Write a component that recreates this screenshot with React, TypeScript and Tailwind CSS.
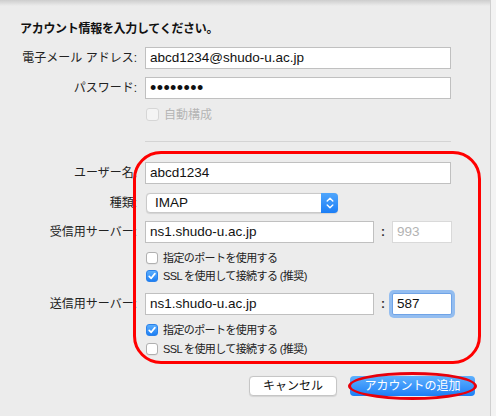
import React from "react";

function Check({ checked = false, disabled = false, big = false }: { checked?: boolean; disabled?: boolean; big?: boolean }) {
  const size = big ? "h-[13px] w-[13px]" : "h-[12px] w-[12px]";
  if (checked) {
    return (
      <div className={`${size} flex shrink-0 items-center justify-center rounded-[3px] border border-[#2c82ea] bg-gradient-to-b from-[#5aaefd] to-[#1c7ff4]`}>
        <svg width="10" height="10" viewBox="0 0 10 10">
          <path d="M2.2 5.3 L4.2 7.3 L7.9 2.6" fill="none" stroke="#ffffff" strokeWidth="1.7" strokeLinecap="round" strokeLinejoin="round" />
        </svg>
      </div>
    );
  }
  if (disabled) {
    return <div className={`${size} shrink-0 rounded-[3px] border border-[#d6d6d6] bg-[#f4f4f4]`} />;
  }
  return <div className={`${size} shrink-0 rounded-[3px] border border-[#b0b0b0] bg-white shadow-[0_0.5px_0.5px_rgba(0,0,0,0.08)]`} />;
}

function Row({ label, children, h = "h-[22px]", mt }: { label?: string; children: React.ReactNode; h?: string; mt: string }) {
  return (
    <div className={`flex items-center ${h} ${mt}`}>
      <div className="w-[137px] shrink-0 text-right text-[12px] leading-none text-[#222222]">{label}</div>
      <div className="ml-[8px] flex items-center">{children}</div>
    </div>
  );
}

function Box({ w, children, muted = false, focus = false }: { w: string; children?: React.ReactNode; muted?: boolean; focus?: boolean }) {
  const border = muted
    ? "border-[#d9d9d9] text-[#b3b3b3]"
    : focus
    ? "border-[#6fa3e6] text-[#111111] shadow-[0_0_0_3px_#93bdf0] rounded-[2px]"
    : "border-[#c0c0c0] text-[#111111]";
  return (
    <div className={`flex h-[22px] ${w} items-center border bg-white pl-[4px] text-[13.5px] leading-none ${border}`}>
      {children}
    </div>
  );
}

function CheckRow({ label, checked, mt }: { label: string; checked?: boolean; mt: string }) {
  return (
    <div className={`flex h-[12px] items-center pl-[146px] ${mt}`}>
      <Check checked={checked} />
      <span className="ml-[5px] whitespace-nowrap text-[11px] leading-none tracking-[-0.6px] text-[#222222]">{label}</span>
    </div>
  );
}

function Colon() {
  return <div className="w-[18px] text-center text-[12px] font-bold leading-none text-[#333333]">:</div>;
}

export default function App() {
  return (
    <div className="relative flex h-[416px] w-[496px] overflow-hidden bg-[#ececec] font-['Liberation_Sans','Noto_Sans_CJK_JP',sans-serif] text-[#1e1e1e]">
      <div className="relative w-[490px] shrink-0">
        <div className="pointer-events-none absolute inset-x-0 top-0 h-[6px] bg-gradient-to-b from-[#cdcdcd] to-[#ececec00]" />

        <div className="pl-[20px] pt-[21px] text-[12px] font-bold leading-[16px] tracking-[-0.3px] text-[#111111]">
          アカウント情報を入力してください。
        </div>

        <Row label="電子メール アドレス:" mt="mt-[10px]">
          <Box w="w-[306px]">abcd1234@shudo-u.ac.jp</Box>
        </Row>
        <Row label="パスワード:" mt="mt-[8px]">
          <Box w="w-[306px]">
            <span className="text-[18px] leading-none tracking-[0.4px] text-[#111111]">••••••••</span>
          </Box>
        </Row>
        <div className="mt-[9px] flex h-[13px] items-center pl-[146px]">
          <Check disabled big />
          <span className="ml-[5px] text-[12px] leading-none text-[#b5b5b5]">自動構成</span>
        </div>

        <div className="ml-[145px] mt-[20px] h-px w-[306px] bg-[#d4d4d4]" />

        <Row label="ユーザー名:" mt="mt-[20px]">
          <Box w="w-[306px]">abcd1234</Box>
        </Row>
        <Row label="種類:" mt="mt-[9px]" h="h-[20px]">
          <div className="ml-[1px] flex h-[20px] w-[192px] items-center rounded-[4px] border border-[#c9c9c9] bg-white shadow-[0_0.5px_1px_rgba(0,0,0,0.1)]">
            <span className="flex-1 pl-[8px] text-[13.5px] leading-none text-[#111111]">IMAP</span>
            <div className="-mr-px -my-px flex h-[20px] w-[17px] items-center justify-center rounded-r-[4px] bg-gradient-to-b from-[#4fa6fc] to-[#1b7ef6]">
              <svg width="10" height="14" viewBox="0 0 10 14">
                <path d="M2.2 5 L5 2.3 L7.8 5" fill="none" stroke="#ffffff" strokeWidth="1.4" strokeLinecap="round" strokeLinejoin="round" />
                <path d="M2.2 9 L5 11.7 L7.8 9" fill="none" stroke="#ffffff" strokeWidth="1.4" strokeLinecap="round" strokeLinejoin="round" />
              </svg>
            </div>
          </div>
        </Row>
        <Row label="受信用サーバー:" mt="mt-[8px]">
          <Box w="w-[229px]">ns1.shudo-u.ac.jp</Box>
          <Colon />
          <Box w="w-[60px]" muted>993</Box>
        </Row>
        <CheckRow label="指定のポートを使用する" mt="mt-[9px]" />
        <CheckRow label="SSL を使用して接続する (推奨)" checked mt="mt-[6px]" />

        <Row label="送信用サーバー:" mt="mt-[11px]">
          <Box w="w-[229px]">ns1.shudo-u.ac.jp</Box>
          <Colon />
          <Box w="w-[60px]" focus>587</Box>
        </Row>
        <CheckRow label="指定のポートを使用する" checked mt="mt-[9px]" />
        <CheckRow label="SSL を使用して接続する (推奨)" mt="mt-[7px]" />

        <div className="mt-[21px] flex justify-end gap-[13px] pr-[15px]">
          <div className="flex h-[20px] w-[88px] items-center justify-center rounded-[4px] border border-[#c6c6c6] bg-white text-[12px] leading-none text-[#111111] shadow-[0_0.5px_1px_rgba(0,0,0,0.1)]">
            キャンセル
          </div>
          <div className="flex h-[20px] w-[125px] items-center justify-center rounded-[4px] bg-gradient-to-b from-[#5db0fd] to-[#1a7ef6] text-[12px] leading-none text-white">
            アカウントの追加
          </div>
        </div>

        <div className="pointer-events-none absolute left-[133px] top-[151px] h-[213px] w-[348px] rounded-[28px] border-[3px] border-[#ff0000]" />
        <div className="pointer-events-none absolute left-[348px] top-[372px] h-[28px] w-[129px] rounded-[50%] border-[3px] border-[#e8000b]" />
      </div>
      <div className="w-px shrink-0 bg-[#d0d0d0]" />
      <div className="flex-1 bg-[#f3f3f3]" />
    </div>
  );
}
